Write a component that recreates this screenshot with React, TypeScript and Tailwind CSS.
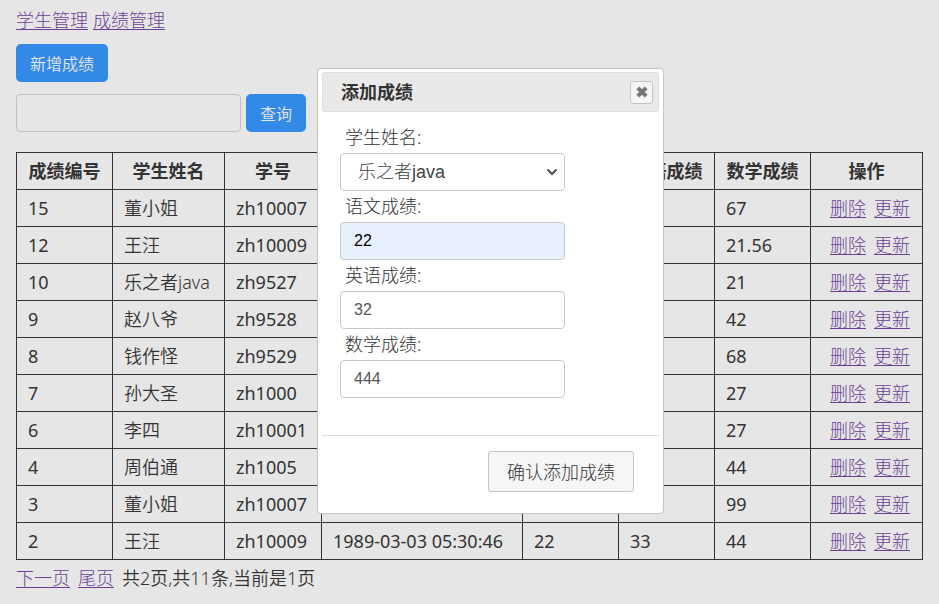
import type { ReactNode } from "react";

type Row = {
  id: string;
  name: string;
  no: string;
  birthday: string;
  chinese: string;
  english: string;
  math: string;
};

const rows: Row[] = [
  { id: "15", name: "董小姐", no: "zh10007", birthday: "", chinese: "", english: "", math: "67" },
  { id: "12", name: "王汪", no: "zh10009", birthday: "", chinese: "", english: "", math: "21.56" },
  { id: "10", name: "乐之者java", no: "zh9527", birthday: "", chinese: "", english: "", math: "21" },
  { id: "9", name: "赵八爷", no: "zh9528", birthday: "", chinese: "", english: "", math: "42" },
  { id: "8", name: "钱作怪", no: "zh9529", birthday: "", chinese: "", english: "", math: "68" },
  { id: "7", name: "孙大圣", no: "zh1000", birthday: "", chinese: "", english: "", math: "27" },
  { id: "6", name: "李四", no: "zh10001", birthday: "", chinese: "", english: "", math: "27" },
  { id: "4", name: "周伯通", no: "zh1005", birthday: "", chinese: "", english: "", math: "44" },
  { id: "3", name: "董小姐", no: "zh10007", birthday: "", chinese: "", english: "", math: "99" },
  { id: "2", name: "王汪", no: "zh10009", birthday: "1989-03-03 05:30:46", chinese: "22", english: "33", math: "44" },
];

const headings = ["成绩编号", "学生姓名", "学号", "", "", "英语成绩", "数学成绩", "操作"];

function Link({ children }: { children: ReactNode }) {
  return (
    <a href="#" className="font-light text-[#6b3f97] underline underline-offset-2">
      {children}
    </a>
  );
}

function PrimaryButton({ children }: { children: ReactNode }) {
  return (
    <button
      type="button"
      className="h-[38px] rounded-[5px] bg-[#338ae6] px-3.5 pt-0.5 text-base font-[350] text-[#e6e6e6]"
    >
      {children}
    </button>
  );
}

function Field({ id, label, children }: { id: string; label: string; children: ReactNode }) {
  return (
    <div>
      <label htmlFor={id} className="block pl-[5px] font-light leading-[31px]">
        {label}
      </label>
      {children}
    </div>
  );
}

const control =
  "block h-[38px] w-[225px] rounded border border-[#c8c8c8] font-['Liberation_Sans','Noto_Sans_CJK_SC',sans-serif] outline-none";

function ScoreDialog() {
  return (
    <div
      role="dialog"
      aria-labelledby="dialog-title"
      className="absolute left-[317px] top-[68px] w-[347px] rounded border border-[#c5c5c5] bg-white px-1 pb-[21px] pt-[3px]"
    >
      <div className="flex h-10 items-center justify-between rounded-[3px] border border-[#dddddd] bg-[#e9e9e9] pl-[18px] pr-[5px]">
        <h2 id="dialog-title" className="font-bold">
          添加成绩
        </h2>
        <button
          type="button"
          aria-label="关闭"
          className="flex size-[23px] items-center justify-center rounded-[3px] border border-[#c5c5c5] bg-[#f6f6f6]"
        >
          <svg viewBox="0 0 12 12" className="size-3" fill="none" stroke="#777777" strokeWidth="4">
            <path d="M1.8 1.8 10.2 10.2M10.2 1.8 1.8 10.2" />
          </svg>
        </button>
      </div>
      <form className="px-[18px] pb-[37px] pt-2.5">
        <Field id="student" label="学生姓名:">
          <div className="relative w-[225px]">
            <select id="student" className={`${control} appearance-none bg-white px-[17px] text-lg font-light text-[#444444]`}>
              <option>乐之者java</option>
            </select>
            <svg
              viewBox="0 0 12 8"
              className="pointer-events-none absolute right-[7px] top-[15px] h-2 w-3"
              fill="none"
              stroke="#4f4f4f"
              strokeWidth="2"
            >
              <path d="M1.5 1.5 6 6 10.5 1.5" />
            </svg>
          </div>
        </Field>
        <Field id="chinese" label="语文成绩:">
          <input id="chinese" defaultValue="22" className={`${control} bg-[#e8f0fe] px-[13px] text-base text-black`} />
        </Field>
        <Field id="english" label="英语成绩:">
          <input id="english" defaultValue="32" className={`${control} bg-white px-[13px] text-base text-[#555555]`} />
        </Field>
        <Field id="math" label="数学成绩:">
          <input id="math" defaultValue="444" className={`${control} bg-white px-[13px] text-base text-[#555555]`} />
        </Field>
      </form>
      <div className="flex justify-end border-t border-[#dddddd] pr-[25px] pt-[15px]">
        <button
          type="button"
          className="h-[41px] w-[146px] rounded-[3px] border border-[#c5c5c5] bg-[#f6f6f6] font-light text-[#333333]"
        >
          确认添加成绩
        </button>
      </div>
    </div>
  );
}

export default function App() {
  return (
    <div className="relative min-h-screen bg-[#e6e6e6] px-4 pt-2 font-['Noto_Sans','Noto_Sans_CJK_SC',sans-serif] text-lg leading-6 text-[#333333]">
      <nav className="flex gap-[5px]">
        <Link>学生管理</Link>
        <Link>成绩管理</Link>
      </nav>
      <div className="mt-3 flex">
        <PrimaryButton>新增成绩</PrimaryButton>
      </div>
      <form className="mt-3 flex gap-[5px]">
        <input
          aria-label="查询"
          className="h-[38px] w-[225px] rounded border border-[#c0c0c0] bg-[#e6e6e6] px-3 text-base outline-none"
        />
        <PrimaryButton>查询</PrimaryButton>
      </form>
      <table className="mt-5 w-full table-fixed border-collapse">
        <colgroup>
          <col className="w-[96px]" />
          <col className="w-[112px]" />
          <col className="w-[97px]" />
          <col className="w-[201px]" />
          <col className="w-[96px]" />
          <col className="w-[96px]" />
          <col className="w-[96px]" />
          <col className="w-[112px]" />
        </colgroup>
        <thead>
          <tr className="h-[37px]">
            {headings.map((h, i) => (
              <th key={i} className="whitespace-nowrap border border-[#333333] font-bold">
                {h}
              </th>
            ))}
          </tr>
        </thead>
        <tbody>
          {rows.map((r) => (
            <tr key={r.id} className="h-[37px]">
              {[r.id, r.name, r.no, r.birthday, r.chinese, r.english, r.math].map((v, i) => (
                <td
                  key={i}
                  className={`whitespace-nowrap border border-[#333333] pl-[11px] ${i === 1 ? "font-[350]" : "font-normal"}`}
                >
                  {v}
                </td>
              ))}
              <td className="border border-[#333333] pr-3">
                <div className="flex justify-end gap-2">
                  <Link>删除</Link>
                  <Link>更新</Link>
                </div>
              </td>
            </tr>
          ))}
        </tbody>
      </table>
      <div className="flex gap-2 pt-1.5 font-[350]">
        <Link>下一页</Link>
        <Link>尾页</Link>
        <span>共2页,共11条,当前是1页</span>
      </div>
      <ScoreDialog />
    </div>
  );
}
